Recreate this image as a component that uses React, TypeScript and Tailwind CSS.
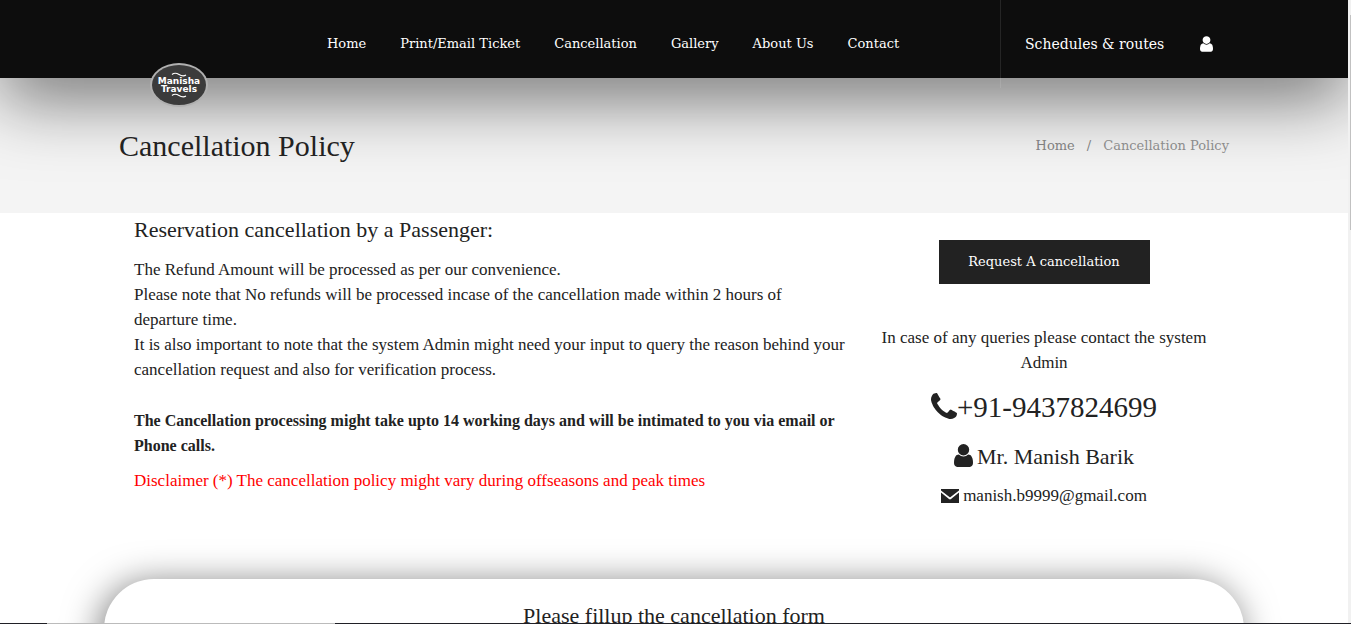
import type { ReactNode } from 'react';

const NAV_LINKS = ['Home', 'Print/Email Ticket', 'Cancellation', 'Gallery', 'About Us', 'Contact'];

interface GlyphProps {
    path: string;
    viewBox: string;
    className: string;
}

const USER_PATH =
    'M1536 1399q0 109-62.5 187t-150.5 78h-854q-88 0-150.5-78t-62.5-187q0-85 8.5-160.5t31.5-152 58.5-131 94-89 134.5-34.5q131 128 313 128t313-128q76 0 134.5 34.5t94 89 58.5 131 31.5 152 8.5 160.5zm-256-887q0 159-112.5 271.5t-271.5 112.5-271.5-112.5-112.5-271.5 112.5-271.5 271.5-112.5 271.5 112.5 112.5 271.5z';
const PHONE_PATH =
    'M1600 1240q0 27-10 70.5t-21 68.5q-21 50-122 106-94 51-186 51-27 0-53-3.5t-57.5-12.5-47-14.5-55.5-20.5-49-18q-98-35-175-83-127-79-264-216t-216-264q-48-77-83-175-3-9-18-49t-20.5-55.5-14.5-47-12.5-57.5-3.5-53q0-92 51-186 56-101 106-122 25-11 68.5-21t70.5-10q14 0 21 3 18 6 53 76 11 19 30 54t35 63.5 31 53.5q3 4 17.5 25t21.5 35.5 7 28.5q0 20-28.5 50t-62 55-62 53-28.5 46q0 9 5 22.5t8.5 20.5 14 24 11.5 19q76 137 174 235t235 174q2 1 19 11.5t24 14 20.5 8.5 22.5 5q18 0 46-28.5t53-62 55-62 50-28.5q14 0 28.5 7t35.5 21.5 25 17.5q25 15 53.5 31t63.5 35 54 30q70 35 76 53 3 7 3 21z';
const ENVELOPE_BODY_PATH = 'M0 3.5 8 10q1 .8 2 0l8-6.5V14H0z';
const ENVELOPE_FLAP_PATH = 'M0 0h18v1.5L9.6 8q-.6.4-1.2 0L0 1.5z';

function Glyph({ path, viewBox, className }: GlyphProps) {
    return (
        <svg viewBox={viewBox} fill="currentColor" className={`shrink-0 ${className}`} aria-hidden="true">
            <path d={path} />
        </svg>
    );
}

function Logo() {
    return (
        <svg viewBox="0 0 60 46" className="h-[46px] w-[60px]" role="img" aria-label="Manisha Travels">
            <ellipse cx="30" cy="23" rx="29" ry="22" fill="#b0b0b0" />
            <ellipse cx="30" cy="23" rx="27" ry="20" fill="#3b3b3b" />
            <path
                d="M23 12.5q3-2.5 7 0t7 .5M23 33.5q3-2.5 7 0t7 .5"
                stroke="#fff"
                strokeWidth="1.2"
                fill="none"
            />
            <g
                fill="#fff"
                fontFamily="'DejaVu Sans', sans-serif"
                fontSize="9"
                fontWeight="bold"
                textAnchor="middle"
            >
                <text x="30" y="22">Manisha</text>
                <text x="30" y="30">Travels</text>
            </g>
        </svg>
    );
}

function Header() {
    return (
        <header className="relative z-10 h-[78px] bg-[#0d0d0d] text-white shadow-[0_20px_70px_rgba(0,0,0,0.55)]">
            <div className="mx-auto flex h-full max-w-[1140px] items-start px-[15px] font-['DejaVu_Serif',serif]">
                <a href="#home" className="absolute top-[62px] ml-[30px]">
                    <Logo />
                </a>
                <nav className="ml-[208px] flex h-[88px] grow items-center gap-[34px] text-[13px]">
                    {NAV_LINKS.map(label => (
                        <a key={label} href="#nav" className="whitespace-nowrap">
                            {label}
                        </a>
                    ))}
                </nav>
                <div className="flex h-[88px] w-[229px] shrink-0 items-center gap-9 border-l border-white/10 pl-6">
                    <a href="#schedules" className="text-sm whitespace-nowrap">
                        Schedules &amp; routes
                    </a>
                    <a href="#account" aria-label="Account">
                        <Glyph path={USER_PATH} viewBox="256 128 1280 1536" className="h-4 w-[13px]" />
                    </a>
                </div>
            </div>
        </header>
    );
}

function PageTitle() {
    return (
        <section className="bg-[#f4f4f4]">
            <div className="mx-auto flex h-[135px] max-w-[1140px] items-center justify-between px-[15px]">
                <h1 className="relative z-20 text-[30px]">Cancellation Policy</h1>
                <nav
                    aria-label="Breadcrumb"
                    className="relative z-20 flex gap-3 font-['DejaVu_Serif',serif] text-[13px] text-[#808080]"
                >
                    <a href="#home">Home</a>
                    <span>/</span>
                    <span className="text-[#8c8c8c]">Cancellation Policy</span>
                </nav>
            </div>
        </section>
    );
}

function ContactLine({ children, className }: { children: ReactNode; className: string }) {
    return <div className={`flex items-center justify-center ${className}`}>{children}</div>;
}

function PolicySection() {
    return (
        <section className="mx-auto flex max-w-[1140px] px-[15px]">
            <div className="w-2/3 pt-[3px] pr-3 pl-[15px]">
                <h2 className="text-[22px] leading-7">Reservation cancellation by a Passenger:</h2>
                <p className="mt-[13px] text-[17px] leading-[25px]">
                    The Refund Amount will be processed as per our convenience.
                    <br />
                    Please note that No refunds will be processed incase of the cancellation made within 2 hours of
                    departure time.
                    <br />
                    It is also important to note that the system Admin might need your input to query the reason behind
                    your cancellation request and also for verification process.
                </p>
                <p className="mt-[26px] text-base leading-[25px] font-bold">
                    The Cancellation processing might take upto 14 working days and will be intimated to you via email
                    or Phone calls.
                </p>
                <p className="mt-[10px] text-[17px] leading-[25px] text-[#f00]">
                    Disclaimer (*) The cancellation policy might vary during offseasons and peak times
                </p>
            </div>
            <div className="w-1/3 px-[15px] pt-[27px] text-center">
                <button
                    type="button"
                    className="h-11 w-[211px] bg-[#222] font-['DejaVu_Serif',serif] text-[13px] text-white"
                >
                    Request A cancellation
                </button>
                <p className="mt-[41px] text-[17px] leading-[25px]">
                    In case of any queries please contact the system Admin
                </p>
                <ContactLine className="mt-[13px] h-10 text-[29px]">
                    <Glyph path={PHONE_PATH} viewBox="192 128 1408 1408" className="mb-1 h-[26px] w-[26px]" />
                    <span>+91-9437824699</span>
                </ContactLine>
                <ContactLine className="mt-[14px] h-7 gap-1 text-[22px]">
                    <Glyph path={USER_PATH} viewBox="256 128 1280 1536" className="mb-[2px] h-[23px] w-[19px]" />
                    <span>Mr. Manish Barik</span>
                </ContactLine>
                <ContactLine className="mt-3 h-7 gap-1 text-[17px]">
                    <Glyph
                        path={`${ENVELOPE_FLAP_PATH} ${ENVELOPE_BODY_PATH}`}
                        viewBox="0 0 18 14"
                        className="h-[14px] w-[18px]"
                    />
                    <a href="mailto:manish.b9999@gmail.com">manish.b9999@gmail.com</a>
                </ContactLine>
            </div>
        </section>
    );
}

function CancellationForm() {
    return (
        <section className="mx-auto mt-[69px] h-[400px] max-w-[1140px] rounded-[50px] bg-white pt-[23px] shadow-[-4px_4px_36px_rgba(0,0,0,0.52)]">
            <h2 className="text-center text-[22px] leading-7">Please fillup the cancellation form</h2>
        </section>
    );
}

export default function App() {
    return (
        <div className="relative flex h-screen overflow-hidden bg-white font-['Liberation_Serif',serif] text-[#222]">
            <main className="min-w-0 grow">
                <Header />
                <PageTitle />
                <PolicySection />
                <CancellationForm />
            </main>
            {/* Scroll track */}
            <div className="relative z-20 w-[3px] shrink-0 bg-[#f1f1f1] pt-[15px] pl-[2px]">
                <div className="h-[215px] bg-[#c1c1c1]" />
            </div>
            {/* Window edge */}
            <div className="absolute inset-x-0 bottom-0 z-30 flex h-px bg-[#202026]">
                <div className="ml-[47px] w-72 bg-[#bbb]" />
            </div>
        </div>
    );
}
